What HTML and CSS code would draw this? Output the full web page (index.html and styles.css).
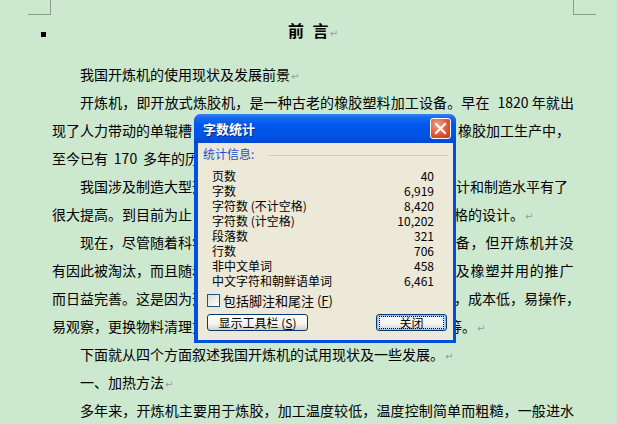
FILE: index.html
```html
<!DOCTYPE html>
<html lang="zh-CN">
<head>
  <meta charset="UTF-8" />
  <title>前言 - 字数统计</title>
  <link rel="stylesheet" href="styles.css">
</head>
<body>
  <div class="page">
    <div class="marks">
      <span class="mark mark-l"></span>
      <span class="mark mark-r"></span>
    </div>

    <div class="title-row">
      <span class="keep"></span>
      <h1 class="title">前 言<span class="pm">↵</span></h1>
    </div>

    <!-- the parts of lines 3-10 under the dialog are left out, the gaps keep the columns -->
    <div class="text">
      <div class="ln ind">我国开炼机的使用现状及发展前景<span class="pm">↵</span></div>
      <div class="ln ind jst">开炼机，即开放式炼胶机，是一种古老的橡胶塑料加工设备。早在<span class="num n4"> 1820 </span>年就出</div>
      <div class="ln"><span>现了人力带动的单辊槽</span><span class="gap gap-266"></span><span>橡胶加工生产中，</span></div>
      <div class="ln"><span>至今已有<span class="num n3"> 170 </span>多年的历</span></div>
      <div class="ln ind"><span>我国涉及制造大型开</span><span class="gap gap-236"></span><span>设计和制造水平有了</span></div>
      <div class="ln"><span>很大提高。到目前为止，</span><span class="gap gap-248"></span><span>格的设计。<span class="pm">↵</span></span></div>
      <div class="ln ind"><span>现在，尽管随着科学</span><span class="gap gap-235"></span><span class="wide">设备，但开炼机并没</span></div>
      <div class="ln"><span>有因此被淘汰，而且随着</span><span class="gap gap-235"></span><span class="wide">以及橡塑并用的推广</span></div>
      <div class="ln"><span>而日益完善。这是因为开</span><span class="gap gap-248"></span><span>，成本低，易操作，</span></div>
      <div class="ln"><span>易观察，更换物料清理方</span><span class="gap gap-242"></span><span>等。<span class="pm">↵</span></span></div>
      <div class="ln ind">下面就从四个方面叙述我国开炼机的试用现状及一些发展。<span class="pm">↵</span></div>
      <div class="ln ind">一、加热方法<span class="pm">↵</span></div>
      <div class="ln ind jst">多年来，开炼机主要用于炼胶，加工温度较低，温度控制简单而粗糙，一般进水</div>
    </div>
  </div>

  <div class="dlg">
    <div class="dlg-bar">
      <span class="dlg-title">字数统计</span>
      <span class="dlg-close">
        <svg width="13" height="13" viewBox="0 0 13 13">
          <path d="M2 2 L11 11 M11 2 L2 11" stroke="#fff" stroke-width="2.2" stroke-linecap="square"/>
        </svg>
      </span>
    </div>
    <div class="dlg-body">
      <div class="group-head">
        <span class="group-label">统计信息:</span>
        <span class="group-line"></span>
      </div>
      <div class="stats">
        <div class="stat"><span>页数</span><span>40</span></div>
        <div class="stat"><span>字数</span><span>6,919</span></div>
        <div class="stat"><span>字符数 (不计空格)</span><span>8,420</span></div>
        <div class="stat"><span>字符数 (计空格)</span><span>10,202</span></div>
        <div class="stat"><span>段落数</span><span>321</span></div>
        <div class="stat"><span>行数</span><span>706</span></div>
        <div class="stat"><span>非中文单词</span><span>458</span></div>
        <div class="stat"><span>中文字符和朝鲜语单词</span><span>6,461</span></div>
      </div>
      <label class="check"><span class="box"></span>包括脚注和尾注 (<u>F</u>)</label>
      <div class="buttons">
        <button class="btn btn-toolbar">显示工具栏 (<u>S</u>)</button>
        <button class="btn btn-default"><span class="focus">关闭</span></button>
      </div>
    </div>
  </div>
</body>
</html>
```

FILE: styles.css
```css
body {
  margin: 0;
  width: 617px;
  height: 424px;
  overflow: hidden;
  position: relative;
  background: #cce8cf;
  font-family: "Noto Sans CJK SC", sans-serif;
  color: #000;
}
.marks {
  display: flex;
  justify-content: space-between;
  padding: 0 21px 0 28px;
}
.mark {
  width: 23px;
  height: 15px;
  box-sizing: border-box;
  border-bottom: 1px solid #8a9b8c;
}
.mark-l {
  border-right: 1px solid #8a9b8c;
}
.mark-r {
  border-left: 1px solid #8a9b8c;
}
.title-row {
  display: flex;
  align-items: center;
  height: 20px;
  margin-top: 7px;
  padding-left: 41px;
}
.keep {
  width: 5px;
  height: 5px;
  background: #000;
  margin-top: 4px;
}
.title {
  margin: 0 0 0 6px;
  width: 522px;
  text-align: center;
  font-size: 16px;
  line-height: 20px;
  font-weight: bold;
  word-spacing: 5px;
}
.pm {
  color: #9a9a9a;
  font-size: 10px;
  font-weight: normal;
  margin-left: 1px;
  font-family: "DejaVu Sans", sans-serif;
}
.text {
  margin: 18px 0 0 52px;
  width: 522px;
}
.ln {
  height: 28px;
  line-height: 28px;
  font-size: 14px;
  white-space: nowrap;
}
.ind {
  text-indent: 28px;
}
.jst {
  text-align: justify;
  text-align-last: justify;
}
.num {
  display: inline-block;
  text-indent: 0;
  text-align: center;
  white-space: pre;
}
.n4 {
  width: 42px;
}
.n3 {
  width: 35px;
}
.gap {
  display: inline-block;
}
.gap-235 { width: 235px; }
.gap-236 { width: 236px; }
.gap-242 { width: 242px; }
.gap-248 { width: 248px; }
.gap-266 { width: 266px; }
.wide {
  letter-spacing: 0.8px;
}

/* dialog */
.dlg {
  position: absolute;
  left: 194px;
  top: 114px;
  width: 262px;
  height: 229px;
  display: flex;
  flex-direction: column;
  background: #0050de;
  border-radius: 7px 7px 0 0;
  font-size: 12px;
}
.dlg-bar {
  height: 29px;
  display: flex;
  align-items: center;
  justify-content: space-between;
  padding: 0 5px 0 9px;
  border-radius: 7px 7px 0 0;
  background: linear-gradient(#3b83f2 0, #1a6cf0 10%, #0058ee 35%, #0054e3 75%, #0049d0 100%);
}
.dlg-title {
  color: #fff;
  font-weight: bold;
  font-size: 13px;
  text-shadow: 1px 1px #0b2a8c;
}
.dlg-close {
  width: 21px;
  height: 21px;
  box-sizing: border-box;
  border: 1px solid #fff;
  border-radius: 3px;
  background: radial-gradient(circle at 35% 30%, #f0a08a, #d8542f 60%, #c03c1a);
  display: flex;
  align-items: center;
  justify-content: center;
}
.dlg-body {
  flex: 1;
  margin: 0 3px 3px 4px;
  background: #ece9d8;
  padding: 3px 0 0 5px;
}
.group-head {
  display: flex;
  align-items: center;
  height: 15px;
  line-height: 15px;
  padding-right: 5px;
}
.group-label {
  color: #1f4fc8;
}
.group-line {
  flex: 1;
  height: 1px;
  background: #d0d0bf;
  margin: 3px 0 0 14px;
}
.stats {
  margin-top: 7px;
  padding: 0 19px 0 9px;
}
.stat {
  display: flex;
  justify-content: space-between;
  height: 15px;
  line-height: 15px;
}
.check {
  display: flex;
  align-items: center;
  height: 15px;
  margin-top: 5px;
  line-height: 15px;
  font-size: 13px;
}
.box {
  width: 13px;
  height: 13px;
  box-sizing: border-box;
  border: 1px solid #1c5180;
  background: linear-gradient(135deg, #dcdcd7, #fff);
  margin: 0 3px 0 4px;
}
.buttons {
  display: flex;
  justify-content: space-between;
  padding: 0 6px 0 4px;
  margin-top: 6px;
}
.btn {
  height: 17px;
  padding: 0;
  border: 1px solid #003c74;
  border-radius: 3px;
  background: linear-gradient(#fff, #f3f3ef 60%, #d6d0c5);
  font-family: "Noto Sans CJK SC", sans-serif;
  font-size: 12px;
  line-height: 14px;
  color: #000;
}
.btn-toolbar {
  width: 101px;
}
.btn-default {
  width: 71px;
  box-shadow: inset 0 0 0 1px #9cb6f0, inset 0 0 0 2px #c7d6f5;
  display: flex;
  align-items: center;
  justify-content: center;
}
.focus {
  display: block;
  width: 63px;
  height: 11px;
  line-height: 11px;
  outline: 1px dotted #000;
}
```
